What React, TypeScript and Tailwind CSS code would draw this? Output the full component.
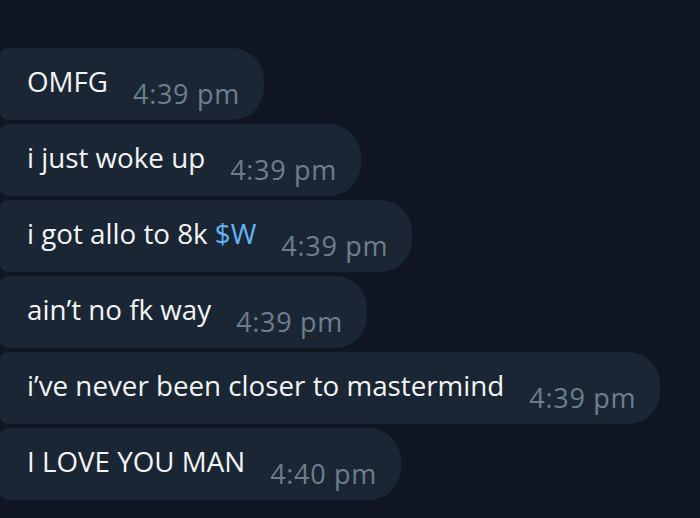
const messages = [
  { text: 'OMFG', time: '4:39 pm' },
  { text: 'i just woke up', time: '4:39 pm' },
  { text: 'i got allo to 8k ', tag: '$W', time: '4:39 pm' },
  { text: 'ain’t no fk way', time: '4:39 pm' },
  { text: 'i’ve never been closer to mastermind', time: '4:39 pm' },
  { text: 'I LOVE YOU MAN', time: '4:40 pm' },
];

export default function App() {
  return (
    <div
      className="flex h-[518px] w-[700px] flex-col items-start gap-[4px] overflow-hidden bg-[#0f1621] pt-[48px]"
      style={{ fontFamily: '"Open Sans", "Noto Sans", sans-serif' }}
    >
      {messages.map((m, i) => (
        <div
          key={i}
          className="flex h-[72px] items-start rounded-l-[8px] rounded-r-[32px] bg-[#1a2633] pl-[27px] pr-[24px]"
        >
          <span className="whitespace-pre pt-[20px] text-[27.75px] leading-none text-[#f3f4f6]">
            {m.text}
            {m.tag && <span className="text-[#62b5f5]">{m.tag}</span>}
          </span>
          <span className="ml-[25px] whitespace-pre pt-[32px] text-[27px] leading-none tracking-[0.7px] text-[#6d7e8e]">
            {m.time}
          </span>
        </div>
      ))}
    </div>
  );
}
